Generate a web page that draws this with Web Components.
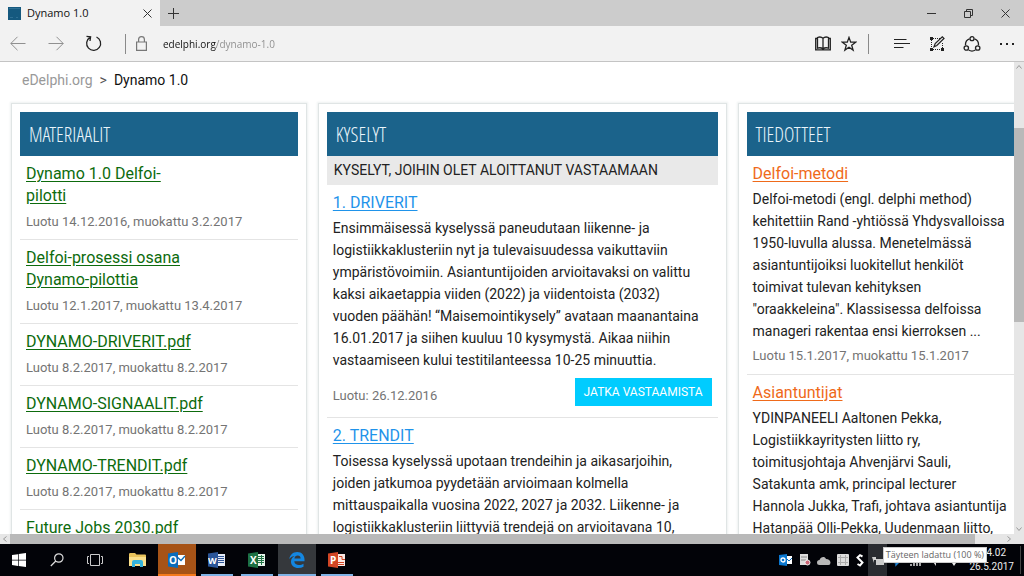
<!DOCTYPE html>
<html lang="fi">
<head>
<meta charset="utf-8">
<meta name="viewport" content="width=device-width, initial-scale=1">
<title>Dynamo 1.0</title>
<style>
  html, body { height: 100%; margin: 0; }
  body { font-family: Roboto, "Liberation Sans", sans-serif; --chrome-font: "Open Sans", "Noto Sans", sans-serif; color: #222; background: #fff; }
</style>
</head>
<body>
<browser-desktop></browser-desktop>

<template id="t-desktop">
  <style>
    :host { display: grid; grid-template-rows: 26px 36px minmax(0, 1fr) 32px; height: 100vh; overflow: hidden; }
    .view { display: grid; grid-template-columns: minmax(0, 1fr) 10px; grid-template-rows: minmax(0, 1fr) 10px; }
    edelphi-page { min-width: 0; }
  </style>
  <tab-bar></tab-bar>
  <address-bar></address-bar>
  <div class="view">
    <edelphi-page></edelphi-page>
    <scroll-track class="v"></scroll-track>
    <scroll-track class="h"></scroll-track>
  </div>
  <task-bar></task-bar>
</template>

<template id="t-tabbar">
  <style>
    :host { display: flex; background: #ccc; font: 11px/26px var(--chrome-font); color: #111; }
    .tab { display: flex; align-items: center; gap: 6px; width: 152px; padding-left: 8px; background: #f2f2f2; }
    .tab > span { flex: 1; }
    .fav { width: 13px; height: 13px; }
    button { display: grid; place-items: center; border: 0; padding: 0; background: none; height: 26px; width: 26px; }
    .win { display: flex; margin-left: auto; }
    .win button { width: 37px; }
    svg { fill: none; stroke: #333; }
  </style>
  <div class="tab">
    <svg class="fav" viewBox="0 0 13 13" aria-hidden="true"><path d="M0 0h13v13H0z" fill="#15597f" stroke="none"/><path d="M1 1.5h11M2 10.5h3M8 10.5h2" stroke="#2f7094"/></svg>
    <span>Dynamo 1.0</span>
    <button aria-label="Sulje välilehti"><svg width="9" height="9"><path d="M.5 .5l8 8M8.500 .5l-8 8"/></svg></button>
  </div>
  <button aria-label="Uusi välilehti"><svg width="11" height="11"><path d="M5.500 0v11M0 5.500h11"/></svg></button>
  <div class="win">
    <button aria-label="Pienennä"><svg width="9" height="9"><path d="M0 4.500h9"/></svg></button>
    <button aria-label="Palauta"><svg width="9" height="9"><path d="M.5 2.500h6v6h-6zM2.500 2.500v-2h6v6h-2"/></svg></button>
    <button aria-label="Sulje"><svg width="9" height="9"><path d="M.5 .5l8 8M8.500 .5l-8 8"/></svg></button>
  </div>
</template>

<template id="t-address">
  <style>
    :host { display: flex; align-items: center; box-sizing: border-box; background: #f2f2f2; border-bottom: 1px solid #c4c4c4; }
    button { display: grid; place-items: center; width: 35px; height: 34px; border: 0; padding: 0; background: none; }
    .nav { display: flex; gap: 3px; }
    .tools { display: flex; }
    .page button { width: 26px; }
    .rule { width: 1px; height: 20px; background: #8a8a8a; }
    .tools + .rule { margin: 0 15px 0 6px; }
    .lock { width: 11px; height: 15px; margin: 0 16px 0 10px; stroke: #777; }
    .nav .rule { margin-left: 11px; align-self: center; }
    input { flex: 1; min-width: 0; height: 24px; border: 0; padding: 0; outline: 0; font: 10px/24px var(--chrome-font);
      color: transparent; background: linear-gradient(90deg, #111 53px, #8c8c8c 53px); -webkit-background-clip: text; background-clip: text; }
    svg { fill: none; stroke: #222; }
    svg.dim { stroke: #909090; }
    svg.lock { stroke: #777; }
  </style>
  <div class="nav">
    <button aria-label="Takaisin"><svg class="dim" width="16" height="15"><path d="M15.500 7.500H.8M7.500 .8L.8 7.500l6.700 6.700"/></svg></button>
    <button aria-label="Eteenpäin"><svg class="dim" width="16" height="15"><path d="M.5 7.500h14.700M8.500 .8l6.700 6.700-6.700 6.700"/></svg></button>
    <button aria-label="Päivitä"><svg width="17" height="17" stroke-width="1.300"><path d="M5 2.400A7 7 0 1 0 11.500 2M1.500 1.300L5.600 1.800 5 6"/></svg></button>
    <span class="rule"></span>
  </div>
  <svg class="lock" viewBox="0 0 11 15" stroke-width="1.200"><path d="M.6 6h9.800v8.400H.6zM2.600 6V3.500a2.900 2.900 0 0 1 5.800 0V6"/></svg>
  <input type="text" aria-label="Osoite" value="edelphi.org/dynamo-1.0">
  <div class="tools page">
    <button aria-label="Lukunäkymä"><svg width="16" height="15" stroke-width="1.300"><path d="M8 2.400v11M8 2.300C6.500 .8 4.200.8 2.500 1.500v10.700c1.800-.7 4-.5 5.500.8 1.500-1.300 3.700-1.500 5.500-.8V1.500C11.800.8 9.500.8 8 2.300M2.500 2.500H.7v11.300h14.600V2.500h-1.800"/></svg></button>
    <button aria-label="Lisää suosikkeihin"><svg width="16" height="16" stroke-width="1.300"><path d="M8 1.400l1.700 4.700 5 .1-4 3.100 1.400 4.800L8 11.300l-4.100 2.800 1.400-4.800-4-3.100 5-.1z"/></svg></button>
  </div>
  <span class="rule"></span>
  <div class="tools">
    <button aria-label="Keskus"><svg width="16" height="11" stroke-width="1.200"><path d="M0 1.500h12.500M0 5.500h16M0 9.500h9.500"/></svg></button>
    <button aria-label="Tee verkkomuistiinpano"><svg width="16" height="16"><path d="M4 2.500h7M2.500 4v8M4 13.500h8M13.500 7v5" stroke-dasharray="1 1"/><path d="M1 1h3v3h-3zM1 12h3v3h-3zM12 12h3v3h-3z" fill="#222" stroke="none"/><path d="M5 10.800l1.200-3.200L13.300.8l1.700 1.700-7.200 7z" stroke-width="1.200" fill="#f2f2f2"/></svg></button>
    <button aria-label="Jaa"><svg width="18" height="16" stroke-width="1.300"><path d="M6.500 2.800a6 6 0 0 0-3.900 6.500M11.500 2.800a6 6 0 0 1 3.900 6.500M5.600 14a6.500 6.500 0 0 0 6.800 0"/><circle cx="9" cy="2.700" r="2"/><circle cx="3.300" cy="12" r="2.200"/><circle cx="14.700" cy="12" r="2.200"/></svg></button>
    <button aria-label="Lisää"><svg width="14" height="4"><path d="M0 1h2v2H0zM6 1h2v2H6zM12 1h2v2h-2z" fill="#222" stroke="none"/></svg></button>
  </div>
</template>

<template id="t-scroll">
  <style>
    :host { display: flex; background: #e6e6e6; }
    :host(.v) { flex-direction: column; }
    :host(.h) { grid-column: 1 / 3; }
    .thumb { background: #b9b9b9; }
    :host(.v) .before { flex: 56; }
    :host(.v) .thumb { flex: 194; }
    :host(.v) .after { flex: 202; }
    :host(.h) .thumb { flex: 965; }
    :host(.h) .after { flex: 29; }
    svg { flex: none; width: 10px; height: 10px; fill: none; stroke: #999; }
    :host(.h) svg { rotate: -90deg; }
    :host(.h) svg:last-child { margin-right: 10px; }
  </style>
  <svg><path d="M2.500 6.500L5 3.500l2.500 3"/></svg>
  <span class="before"></span><span class="thumb"></span><span class="after"></span>
  <svg><path d="M2.500 3.500L5 6.500l2.500-3"/></svg>
</template>

<template id="t-page">
  <style>
    :host { display: block; overflow: hidden; background: #fff; }
    nav { display: flex; gap: 7px; padding: 8px 22px 0; font-size: 14px; line-height: 20px; color: #555; }
    nav a { color: #999; text-decoration: none; }
    nav b { font-weight: 400; color: #111; }
    .columns { display: grid; grid-template-columns: 296fr 409fr 296fr; gap: 11px; width: 103%; box-sizing: border-box; padding: 13px 11px 0; }
  </style>
  <nav aria-label="Murupolku"><a href="#">eDelphi.org</a><span>&gt;</span><b>Dynamo 1.0</b></nav>
  <div class="columns">
    <content-panel heading="Materiaalit" style="--link:#0d6b0d">
      <material-item><a slot="title" href="#">Dynamo 1.0 Delfoi-<br>pilotti</a><span slot="meta">Luotu 14.12.2016, muokattu 3.2.2017</span></material-item>
      <material-item><a slot="title" href="#">Delfoi-prosessi osana<br>Dynamo-pilottia</a><span slot="meta">Luotu 12.1.2017, muokattu 13.4.2017</span></material-item>
      <material-item><a slot="title" href="#">DYNAMO-DRIVERIT.pdf</a><span slot="meta">Luotu 8.2.2017, muokattu 8.2.2017</span></material-item>
      <material-item><a slot="title" href="#">DYNAMO-SIGNAALIT.pdf</a><span slot="meta">Luotu 8.2.2017, muokattu 8.2.2017</span></material-item>
      <material-item><a slot="title" href="#">DYNAMO-TRENDIT.pdf</a><span slot="meta">Luotu 8.2.2017, muokattu 8.2.2017</span></material-item>
      <material-item><a slot="title" href="#">Future Jobs 2030.pdf</a></material-item>
    </content-panel>
    <content-panel heading="Kyselyt" sub="Kyselyt, joihin olet aloittanut vastaamaan" style="--link:#1f93ea">
      <article-item><a slot="title" href="#">1. DRIVERIT</a>Ensimmäisessä kyselyssä paneudutaan liikenne- ja<br>logistiikkaklusteriin nyt ja tulevaisuudessa vaikuttaviin<br>ympäristövoimiin. Asiantuntijoiden arvioitavaksi on valittu<br>kaksi aikaetappia viiden (2022) ja viidentoista (2032)<br>vuoden päähän! “Maisemointikysely” avataan maanantaina<br>16.01.2017 ja siihen kuuluu 10 kysymystä. Aikaa niihin<br>vastaamiseen kului testitilanteessa 10-25 minuuttia.<span slot="meta">Luotu: 26.12.2016</span><action-button slot="action">Jatka vastaamista</action-button></article-item>
      <article-item><a slot="title" href="#">2. TRENDIT</a>Toisessa kyselyssä upotaan trendeihin ja aikasarjoihin,<br>joiden jatkumoa pyydetään arvioimaan kolmella<br>mittauspaikalla vuosina 2022, 2027 ja 2032. Liikenne- ja<br>logistiikkaklusteriin liittyviä trendejä on arvioitavana 10,</article-item>
    </content-panel>
    <content-panel heading="Tiedotteet" style="--link:#ef6a1a">
      <article-item><a slot="title" href="#">Delfoi-metodi</a>Delfoi-metodi (engl. delphi method)<br>kehitettiin Rand -yhtiössä Yhdysvalloissa<br>1950-luvulla alussa. Menetelmässä<br>asiantuntijoiksi luokitellut henkilöt<br>toimivat tulevan kehityksen<br>"oraakkeleina". Klassisessa delfoissa<br>manageri rakentaa ensi kierroksen ...<span slot="meta">Luotu 15.1.2017, muokattu 15.1.2017</span></article-item>
      <article-item><a slot="title" href="#">Asiantuntijat</a>YDINPANEELI Aaltonen Pekka,<br>Logistiikkayritysten liitto ry,<br>toimitusjohtaja Ahvenjärvi Sauli,<br>Satakunta amk, principal lecturer<br>Hannola Jukka, Trafi, johtava asiantuntija<br>Hatanpää Olli-Pekka, Uudenmaan liitto,</article-item>
    </content-panel>
  </div>
</template>

<template id="t-panel">
  <style>
    :host { display: block; box-sizing: border-box; min-width: 0; min-height: 100vh; padding: 8px; border: 1px solid #e0e5e5; box-shadow: 0 0 2px 1px #eef1f1; }
    h2 { margin: 0; padding: 2px 9px 0; background: #1b638b; color: #eaf5fb; font: 300 20px/42px "Open Sans Condensed Light", "Roboto Condensed", sans-serif; text-transform: uppercase; }
    h3 { margin: 0; padding: 0 7px; background: #e9e9e9; color: #222; font-size: 14px; line-height: 29px; font-weight: 400; text-transform: uppercase; }
    h3:empty { display: none; }
  </style>
  <h2></h2><h3></h3>
  <slot></slot>
</template>

<template id="t-material">
  <style>
    :host { display: block; padding: 7px 6px; border-bottom: 1px solid #e4e4e4; white-space: nowrap; }
    .title { font-size: 16px; line-height: 22px; }
    ::slotted(a) { color: var(--link); text-underline-offset: 2px; }
    .meta { margin-top: 5px; font-size: 13px; line-height: 20px; color: #747474; }
  </style>
  <div class="title"><slot name="title"></slot></div>
  <div class="meta"><slot name="meta"></slot></div>
</template>

<template id="t-article">
  <style>
    :host { display: block; padding: 7px 6px 0; white-space: nowrap; border-bottom: 1px solid #e4e4e4; }
    .title { font-size: 16px; line-height: 22px; }
    ::slotted(a) { color: var(--link); text-underline-offset: 2px; }
    .text { margin-top: 3px; font-size: 14px; line-height: 22px; }
    footer { display: flex; justify-content: space-between; align-items: flex-end; padding: 4px 0 8px; font-size: 13px; line-height: 20px; color: #747474; }
    footer.wide { padding: 7px 0 11px; }
  </style>
  <div class="title"><slot name="title"></slot></div>
  <div class="text"><slot></slot></div>
  <footer><slot name="meta"></slot><slot name="action"></slot></footer>
</template>

<template id="t-action">
  <style>
    :host { display: block; }
    button { display: block; height: 28px; border: 0; padding: 0 9px; background: #0cf; color: #fff; font: 12px/28px Roboto, sans-serif; text-transform: uppercase; }
  </style>
  <button type="button"><slot></slot></button>
</template>

<template id="t-taskbar">
  <style>
    :host { display: flex; position: relative; background: #020308; color: #eee; font-size: 10px; line-height: 14px; }
    .apps { display: flex; }
    .open { margin-left: 4px; gap: 2px; }
    button { display: grid; place-items: center; width: 38px; height: 32px; padding: 0; border: 0; background: none; }
    .run { background: linear-gradient(#7fb2e5, #7fb2e5) 50% 100% / 32px 2px no-repeat; }
    .alert { background: #a65317; box-shadow: inset 0 -2px #f47a1c; }
    .active { background: #35383c; box-shadow: inset 0 -2px #7fb2e5; }
    text { font: bold 10px "Open Sans", sans-serif; fill: #fff; }
    .tray { display: flex; margin-left: auto; align-items: center; }
    .tray button { width: 19px; }
    .tray .hover { background: #2a2c31; }
    .clock { display: grid; width: 45px; padding-right: 6px; margin: 0 3px 0 6px; border-right: 1px solid #444; }
    .clock time { justify-self: end; }
    .clock time:first-child { padding-right: 8px; }
    .tip { position: absolute; right: 37px; top: 3px; padding: 0 2px; background: #fff; border: 1px solid #ccc; color: #666; font: 9px/14px var(--chrome-font); white-space: nowrap; }
  </style>
  <div class="apps">
    <button aria-label="Käynnistä"><svg width="14" height="14" fill="#fff"><path d="M0 2l6-.8v5.500H0zM6.700 1.100L14 0v6.700H6.700zM0 7.400h6V13l-6-.9zM6.700 7.400H14V14l-7.300-1z"/></svg></button>
    <button aria-label="Haku"><svg width="14" height="14" fill="none" stroke="#ddd" stroke-width="1.200"><circle cx="8.800" cy="5" r="4.200"/><path d="M5.800 8L.8 13"/></svg></button>
    <button aria-label="Tehtävänäkymä"><svg width="16" height="12" fill="none" stroke="#ccc"><path d="M3.500.5h9v11h-9zM2 2.500H.5v7H2M14 2.500h1.500v7H14"/></svg></button>
  </div>
  <div class="apps open">
    <button aria-label="Resurssienhallinta"><svg width="17" height="14"><path d="M0 1.500C0 .6.500 0 1 0h5l1.500 1.500H16q1 0 1 1V13H0z" fill="#e9c35c"/><path d="M0 4h17v9H0z" fill="#fbe08c"/><path d="M3 14V9q0-2 2-2h7q2 0 2 2v5h-3v-3H6v3z" fill="#35b3dc"/></svg></button>
    <button class="alert" aria-label="Outlook"><svg width="18" height="16"><path d="M8 3h9v10H8z" fill="#fff"/><path d="M8 4l5 4.500L17 4" fill="none" stroke="#0c6db8" stroke-width="1.300"/><path d="M0 1.500L10 0v16L0 14.500z" fill="#0b6cbb"/><text x="1" y="12">O</text></svg></button>
    <button class="run" aria-label="Word"><svg width="18" height="16"><path d="M9 2h8v12H9z" fill="#e6edf8"/><path d="M10 4.500h6M10 6.500h6M10 8.500h6M10 10.500h6" stroke="#2f5597"/><path d="M0 1.500L10 0v16L0 14.500z" fill="#2b5699"/><text x="0" y="12" style="font-size:9px">W</text></svg></button>
    <button class="run" aria-label="Excel"><svg width="18" height="16"><path d="M9 2h8v12H9z" fill="#e8f4ec"/><path d="M10 4.500h6M10 6.500h6M10 8.500h6M10 10.500h6M13.500 3v10" stroke="#217346"/><path d="M0 1.500L10 0v16L0 14.500z" fill="#1d7044"/><text x="2" y="12">X</text></svg></button>
    <button class="active" aria-label="Edge"><svg width="16" height="16" viewBox="0 0 16 16"><path d="M.3 7C1 2.800 4 0 8.200 0c4.800 0 7.300 3.500 7.300 7.600v1.700H5.300c.1 2.600 2.200 3.700 4.600 3.700 1.800 0 3.300-.5 4.600-1.300v3.100c-1.500.8-3.200 1.200-5.100 1.200C5 16 2 13.400 2 9.700c0-2.500 1.400-4.500 3.600-5.600C3.700 4.300 1.800 5 .3 7zm5.100-.5h6.200c0-2-1-3-2.900-3-1.800 0-3 1.200-3.300 3z" fill="#1486e0"/></svg></button>
    <button class="run" aria-label="PowerPoint"><svg width="18" height="16"><path d="M9 2h8v12H9z" fill="#fbe9e4"/><path d="M11 4.500h3v3h3M10 10.500h6M10 12.500h6" fill="none" stroke="#d04423"/><path d="M0 1.500L10 0v16L0 14.500z" fill="#d24625"/><text x="2" y="12">P</text></svg></button>
  </div>
  <div class="tray">
    <button aria-label="Outlook"><svg width="14" height="12"><path d="M6 2h7v8H6z" fill="#fff"/><path d="M7 4l3 3 3-3" fill="none" stroke="#0c6db8"/><path d="M0 1l8-1v12l-8-1z" fill="#0b78d0"/><circle cx="4" cy="6" r="2" fill="none" stroke="#fff" stroke-width="1.300"/></svg></button>
    <button aria-label="Tulostin"><svg width="12" height="12"><path d="M1 0h8v11H1z" fill="#ddd"/><path d="M2 3h6M2 6h5" stroke="#888"/><circle cx="8.500" cy="8.500" r="2.500" fill="#c67" stroke="#eee"/></svg></button>
    <button aria-label="OneDrive"><svg width="14" height="9"><path d="M2.500 9a2.500 2.500 0 0 1 0-5C3.500 1 7.500-.5 9 3q4 .3 4.500 3.500 0 2.500-2 2.500z" fill="#b8b8b8"/></svg></button>
    <button aria-label="Laite"><svg width="12" height="12"><path d="M1 0h10q1 0 1 1v10q0 1-1 1H1q-1 0-1-1V1q0-1 1-1z" fill="#ddd"/><path d="M3.500 1v10M8.500 1v10M1 3.500h10M1 8.500h10" stroke="#aaa"/></svg></button>
    <button aria-label="Synkronointi" style="width:16px"><svg width="8" height="13" fill="none" stroke="#fff" stroke-width="2"><path d="M6.500 2.500L4 1.200 1.500 3.500l5 5L4 11.500 1.500 10"/></svg></button>
    <button class="hover" aria-label="Akku"><svg width="12" height="10"><path d="M0 2h4v3H2v3M4 4h8v6H4z" fill="#ccc"/></svg></button>
    <button aria-label="Bluetooth"><svg width="8" height="14"><path d="M1 4l5 5-3 3V2l3 3-5 5" fill="none" stroke="#1d84d8" stroke-width="1.400"/></svg></button>
    <button aria-label="Verkko"><svg width="12" height="12"><path d="M1 12v-2M4 12V8M7 12V5M10 12V2" stroke="#ddd" stroke-width="1.500"/></svg></button>
    <button aria-label="Äänenvoimakkuus"><svg width="12" height="12"><path d="M1 4h3l3-3v11L4 8H1z" fill="#ddd"/></svg></button>
    <button aria-label="Ilmoitukset"><svg width="12" height="12"><path d="M0 0h12v9H8l-2 3-2-3H0z" fill="#eee"/></svg></button>
    <div class="clock"><time>4.02</time><time>26.5.2017</time></div>
  </div>
  <div class="tip" role="tooltip">Täyteen ladattu (100 %)</div>
</template>

<script>
const define = (name, templateId, setup) => customElements.define(name, class extends HTMLElement {
  constructor() {
    super();
    this.attachShadow({ mode: 'open' }).append(document.getElementById(templateId).content.cloneNode(true));
  }
  connectedCallback() { if (setup) setup(this, this.shadowRoot); }
});

define('tab-bar', 't-tabbar');
define('address-bar', 't-address');
define('scroll-track', 't-scroll');
define('content-panel', 't-panel', (host, root) => {
  root.querySelector('h2').textContent = host.getAttribute('heading');
  root.querySelector('h3').textContent = host.getAttribute('sub') || '';
});
define('material-item', 't-material');
define('article-item', 't-article', (host, root) => {
  root.querySelector('footer').classList.toggle('wide', !!host.querySelector('action-button'));
});
define('action-button', 't-action');
define('edelphi-page', 't-page');
define('task-bar', 't-taskbar');
define('browser-desktop', 't-desktop');
</script>
</body>
</html>
